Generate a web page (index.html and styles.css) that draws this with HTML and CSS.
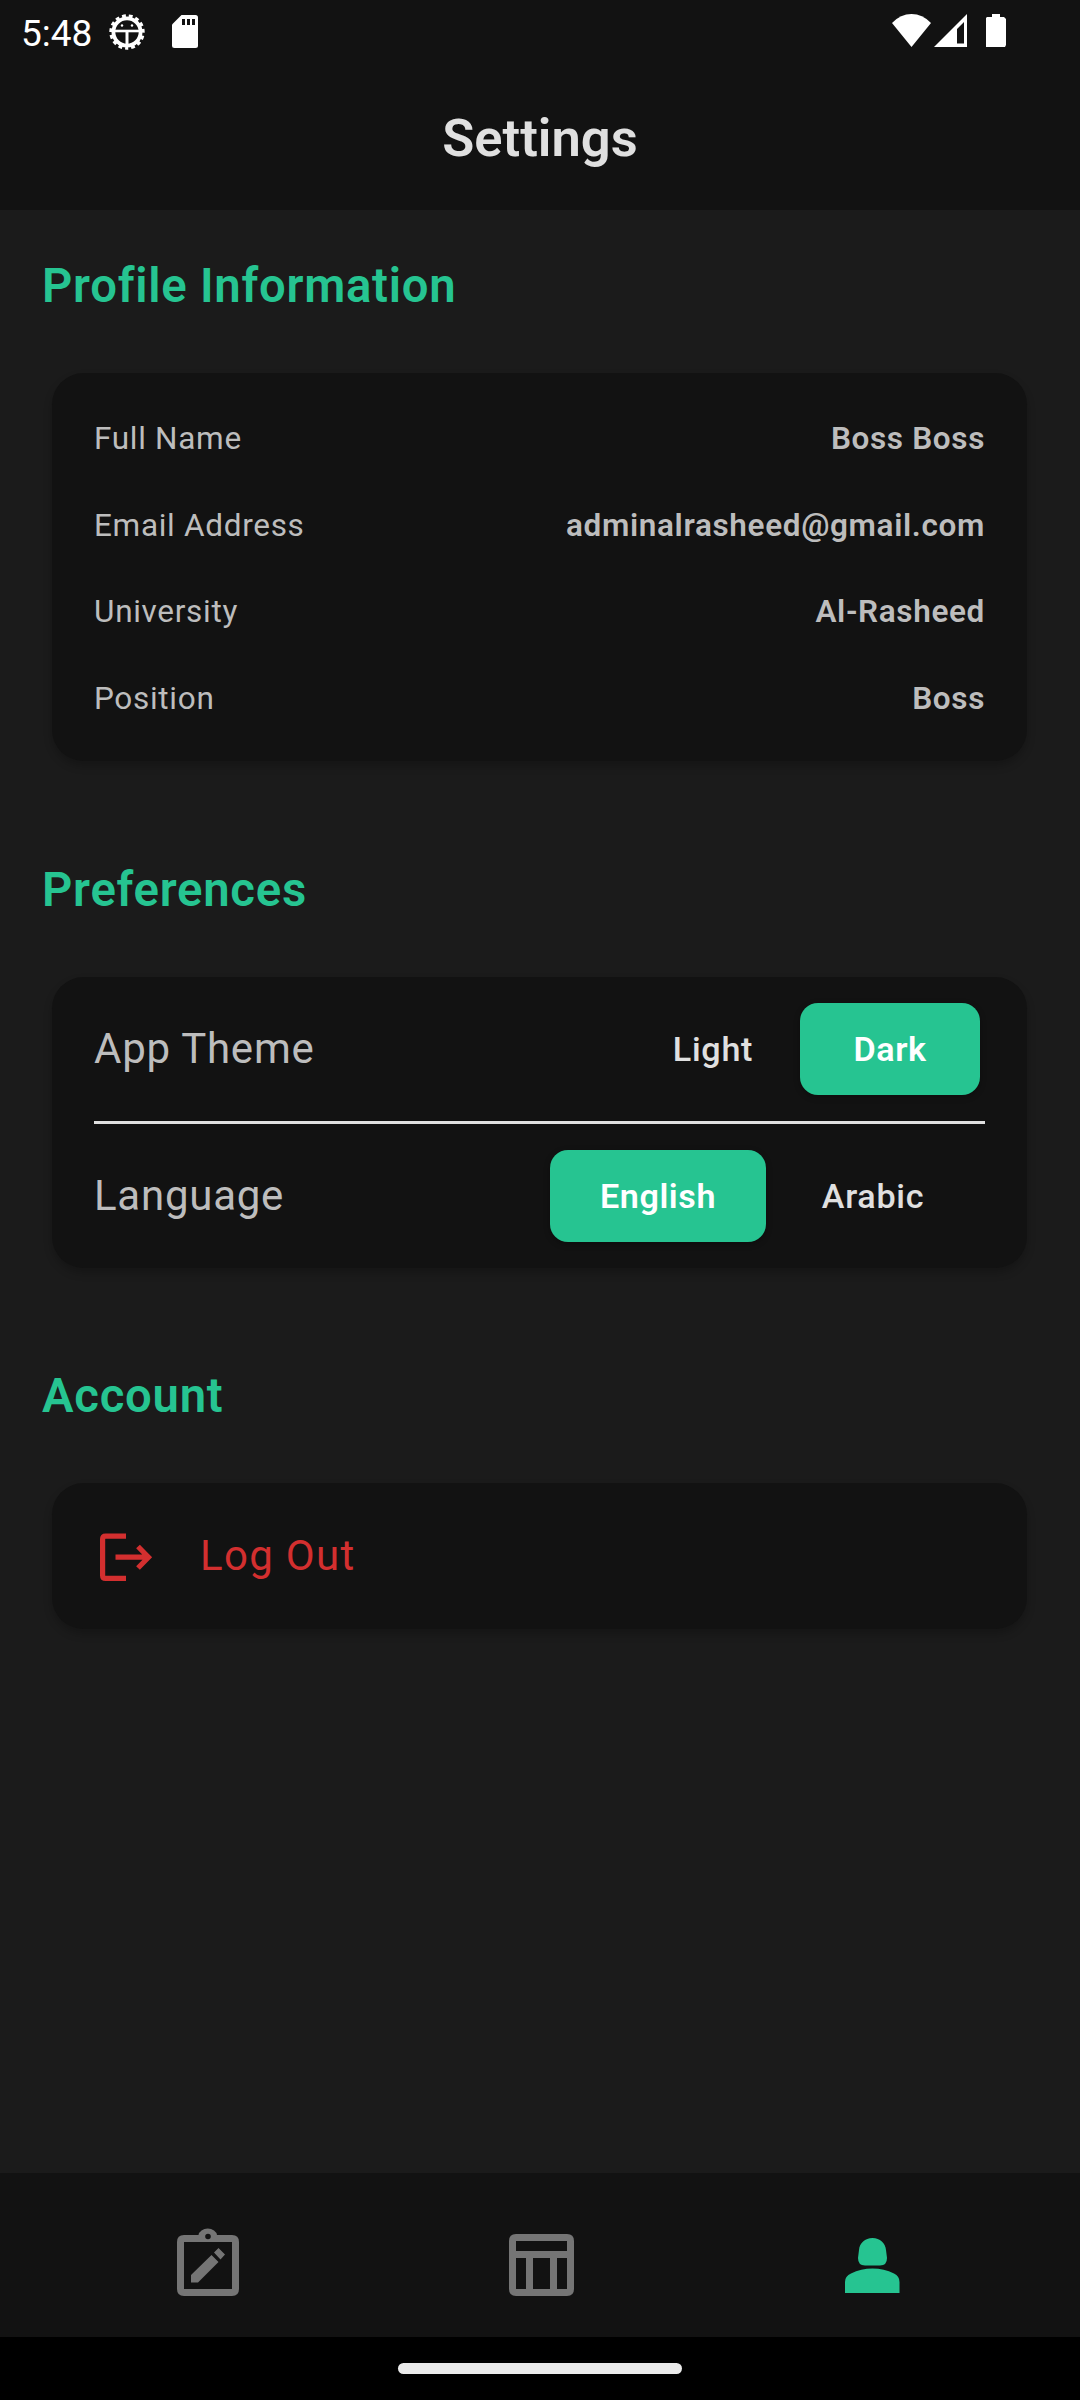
FILE: index.html
```html
<!DOCTYPE html>
<html lang="en">
<head>
<meta charset="utf-8">
<title>Settings</title>
<link rel="stylesheet" href="styles.css">
</head>
<body>
<div class="screen">
  <header class="top">
    <div class="status">
      <span class="clock">5:48</span>
      <svg class="gear" width="38" height="38" viewBox="-19 -19 38 38">
        <circle r="13.6" fill="none" stroke="#fff" stroke-width="3.8"/>
        <circle r="16" fill="none" stroke="#fff" stroke-width="3.4" stroke-dasharray="3.8 2.902" stroke-dashoffset="1.9" transform="rotate(90)"/>
        <path d="M-12 -1H12" stroke="#fff" stroke-width="2.600"/>
        <path d="M0 0V13" stroke="#fff" stroke-width="3"/>
        <circle cx="-5" cy="-6.500" r="1.200" fill="#fff"/><circle cx="5" cy="-6.500" r="1.200" fill="#fff"/>
      </svg>
      <svg class="sd" width="26" height="33" viewBox="0 0 26 33">
        <path d="M9.500 0H23.500Q26 0 26 2.500V30.500Q26 33 23.500 33H2.500Q0 33 0 30.500V9.500Z" fill="#fff"/>
        <path d="M10 4h3v6h-3zM15 4h3v6h-3zM20 4h3v6h-3z" fill="#121212"/>
      </svg>
      <svg class="wifi" width="39" height="33" viewBox="0 0 39 33"><path d="M0 9Q8.500 0 19.500 0T39 9L19.500 33Z" fill="#fff"/></svg>
      <svg class="signal" width="33" height="33" viewBox="0 0 33 33"><path fill-rule="evenodd" d="M33 0V33H0ZM30 8L23 15V29.500H30Z" fill="#fff"/></svg>
      <svg class="battery" width="20" height="33" viewBox="0 0 20 33"><path d="M6 0h8v3h4l2 2v26l-1 2H0V4l1-1h5z" fill="#fff"/></svg>
    </div>
    <h1 class="title">Settings</h1>
  </header>

  <main class="content">
    <h2 class="heading">Profile Information</h2>
    <section class="card profile">
      <div class="field"><span>Full Name</span><span class="value">Boss Boss</span></div>
      <div class="field"><span>Email Address</span><span class="value">adminalrasheed@gmail.com</span></div>
      <div class="field"><span>University</span><span class="value">Al-Rasheed</span></div>
      <div class="field"><span>Position</span><span class="value">Boss</span></div>
    </section>

    <h2 class="heading">Preferences</h2>
    <section class="card prefs">
      <div class="pref">
        <span class="label">App Theme</span>
        <span class="option light">Light</span>
        <span class="option active dark">Dark</span>
      </div>
      <div class="divider"></div>
      <div class="pref">
        <span class="label">Language</span>
        <span class="option active english">English</span>
        <span class="option arabic">Arabic</span>
      </div>
    </section>

    <h2 class="heading">Account</h2>
    <section class="card account">
      <svg width="63" height="63" viewBox="0 0 63 63" fill="none" stroke="#d32f2f" stroke-width="5.200">
        <path d="M32 11.100H11.600Q8.600 11.100 8.600 14.100V50.400Q8.600 53.400 11.600 53.400H32"/>
        <path d="M21.500 32.200H54M44 21.500L54.500 32.200L44 43"/>
      </svg>
      <span class="logout">Log Out</span>
    </section>
  </main>

  <nav class="tabs">
    <svg class="tab-edit" width="62" height="68" viewBox="0 0 62 68">
      <path fill="#757575" fill-rule="evenodd" d="M7 7H21.500A9.300 7.200 0 0 1 40 7H55Q62 7 62 14V61Q62 68 55 68H7Q0 68 0 61V14Q0 7 7 7ZM7 14V61H55V14ZM31 5.700A2.800 2.800 0 1 0 31 11.300A2.800 2.800 0 1 0 31 5.700Z"/>
      <path fill="#757575" d="M14 54.500V47L34.500 27L41.500 34L21 54.500ZM37 24.500L41.500 20L48 26.500L43.500 31.500Z"/>
    </svg>
    <svg class="tab-table" width="65" height="62" viewBox="0 0 65 62">
      <path fill="#757575" fill-rule="evenodd" d="M7 0H58Q65 0 65 7V55Q65 62 58 62H7Q0 62 0 55V7Q0 0 7 0ZM7 7V17H58V7ZM7 24V55H17V24ZM24 24V55H41V24ZM48 24V55H58V24Z"/>
    </svg>
    <svg class="tab-person" width="55" height="55" viewBox="0 0 55 55">
      <path fill="#26c491" d="M27.500 0C35 0 40.500 5 41 12L42 20Q42 27.500 35 27.500H20Q13 27.500 13 20L14 12C14.500 5 20 0 27.500 0ZM0 55V44Q0 38 6 35.500Q16 30.500 27.500 30.500T49 35.500Q54.500 38 54.500 44V55Z"/>
    </svg>
  </nav>
  <footer class="gesture"><div class="handle"></div></footer>
</div>
</body>
</html>
```

FILE: styles.css
```css
* { box-sizing: border-box; }
body { margin: 0; background: #1b1b1b; font-family: Roboto, sans-serif; }
h1, h2 { margin: 0; }
svg { display: block; flex: none; }
.screen { width: 1080px; height: 2400px; display: flex; flex-direction: column; }

.top { height: 210px; background: #121212; }
.status { height: 64px; display: flex; align-items: flex-start; padding: 0 76px 0 21px; color: #fff; }
.clock { width: 87px; margin-top: 12px; font-size: 37px; line-height: 44px; }
.gear { margin-top: 13px; }
.sd { margin: 15px 0 0 26px; }
.wifi { margin: 14px 3px 0 auto; }
.signal { margin-top: 14px; }
.battery { margin: 14px -2px 0 19px; }
.title { height: 146px; padding-top: 43px; text-align: center; font-size: 52.5px; line-height: 62px; font-weight: 600; color: #e0e0e0; }

.content { flex: 1; }
.heading { height: 163px; padding: 48px 0 0 42px; font-size: 47.25px; line-height: 56px; font-weight: 600; letter-spacing: 0.75px; color: #26c491; }
.card { margin: 0 53px 52px 52px; border-radius: 31.5px; background: #121212; padding: 0 42px; box-shadow: 0 5px 8px rgba(0, 0, 0, 0.22); }

.profile { height: 388px; padding-top: 22.5px; margin-bottom: 53px; }
.field { height: 86.6px; display: flex; justify-content: space-between; align-items: center; font-size: 31.5px; letter-spacing: 0.7px; color: #bdbdbd; }
.value { font-weight: 600; letter-spacing: 0.65px; }

.prefs { height: 291px; padding-top: 26px; }
.pref { height: 92px; display: flex; align-items: center; }
.label { flex: 1; padding-bottom: 2px; font-size: 42px; letter-spacing: 0.75px; color: #bdbdbd; }
.option { height: 92px; display: flex; align-items: center; justify-content: center; border-radius: 18px; font-size: 34.125px; font-weight: 500; letter-spacing: 0.7px; color: #e0e0e0; }
.active { background: #26c491; color: #fff; font-weight: 600; letter-spacing: 0.6px; box-shadow: 0 2px 6px rgba(0, 0, 0, 0.3); }
.light { width: 174px; }
.dark { width: 180px; margin-right: 5px; }
.english { width: 216px; }
.arabic { width: 214px; margin-right: 5px; }
.divider { height: 3px; margin: 26px 0; background: #e0e0e0; }

.account { height: 146px; display: flex; align-items: center; }
.logout { margin-left: 43px; padding-bottom: 2px; font-size: 42px; letter-spacing: 1.3px; color: #d32f2f; }

.tabs { height: 164px; background: #121212; display: flex; align-items: flex-end; padding: 0 180px 41px 177px; }
.tab-table { margin-left: 270px; }
.tab-person { margin: 0 0 3px auto; }
.gesture { height: 63px; background: #000; padding-top: 26px; }
.handle { width: 284px; height: 11px; margin: 0 auto; border-radius: 5.5px; background: #ebebeb; }
```
